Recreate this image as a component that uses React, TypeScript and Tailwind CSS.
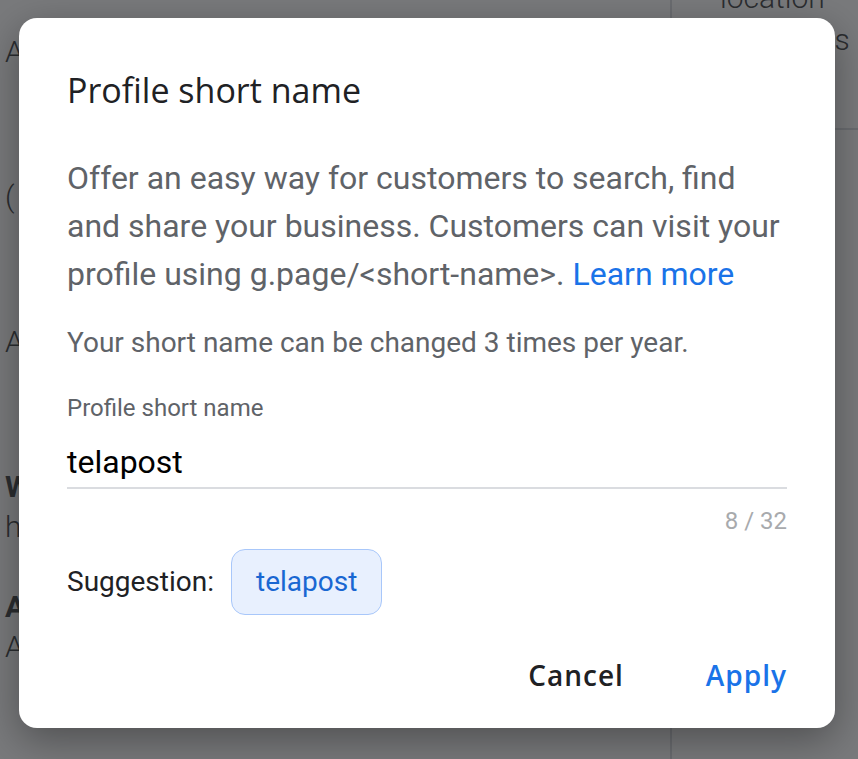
import React from 'react'

const roboto = { fontFamily: 'Roboto, "Liberation Sans", sans-serif' }
const gsans = { fontFamily: '"Open Sans", Roboto, sans-serif' }

function BackgroundPage() {
  return (
    <div className="flex h-full w-full bg-white text-[#3c4043]" style={roboto}>
      <div className="flex-1 pl-[5px] text-[30px] leading-[40px]">
        <div className="mt-[32px] font-light">A</div>
        <div className="mt-[105px] font-light">(</div>
        <div className="mt-[105px] font-light">A</div>
        <div className="mt-[105px] font-bold">W</div>
        <div className="font-light">h</div>
        <div className="mt-[40px] font-bold">A</div>
        <div className="font-light">A</div>
      </div>
      <div className="w-[188px] border-l-2 border-[#dadce0] flex flex-col">
        <div className="h-[130px] border-b-2 border-[#dadce0] pl-[48px] text-[30px] leading-[40px] font-light">
          <div className="-mt-[22px]">location</div>
          <div className="pl-[98px] mt-[2px]">ns</div>
        </div>
      </div>
    </div>
  )
}

export default function App() {
  return (
    <div className="relative h-[759px] w-[858px] overflow-hidden">
      <BackgroundPage />
      <div className="absolute inset-0 bg-[rgba(32,33,36,0.6)] flex items-start pl-[19px] pt-[18px]">
        <div className="w-[816px] h-[710px] bg-white rounded-[18px] shadow-[0_12px_40px_rgba(0,0,0,0.35)] px-[48px] pt-[52px] flex flex-col">
          <h1 className="text-[34px] leading-[40px] text-[#202124]" style={gsans}>
            Profile short name
          </h1>
          <p className="mt-[44px] text-[32px] leading-[48px] text-[#5f6368]" style={roboto}>
            Offer an easy way for customers to search, find and share your business. Customers can visit your
            profile using g.page/&lt;short-name&gt;. <span className="text-[#1a73e8]">Learn more</span>
          </p>
          <p className="mt-[27px] text-[28px] leading-[36px] text-[#5f6368]" style={roboto}>
            Your short name can be changed 3 times per year.
          </p>
          <div className="mt-[33px] text-[24px] leading-[28px] text-[#5f6368]" style={roboto}>
            Profile short name
          </div>
          <div className="mt-[20px] pb-[5px] border-b-2 border-[#dadce0] text-[32px] leading-[40px] text-[#000]" style={roboto}>
            telapost
          </div>
          <div className="mt-[18px] text-right text-[24px] leading-[28px] text-[#a8aaad]" style={roboto}>
            8 / 32
          </div>
          <div className="mt-[14px] flex items-center gap-[17px]" style={roboto}>
            <span className="text-[28px] text-[#202124]">Suggestion:</span>
            <span className="h-[66px] px-[24px] flex items-center rounded-[14px] border-[1.5px] border-[#a8c7fa] bg-[#e8f0fe] text-[28px] text-[#1967d2]">
              telapost
            </span>
          </div>
          <div className="mt-[40px] flex justify-end gap-[82px] text-[28px] leading-[40px] font-[550] tracking-[1px]" style={gsans}>
            <button className="text-[#202124]">Cancel</button>
            <button className="text-[#1a73e8]">Apply</button>
          </div>
        </div>
      </div>
    </div>
  )
}
